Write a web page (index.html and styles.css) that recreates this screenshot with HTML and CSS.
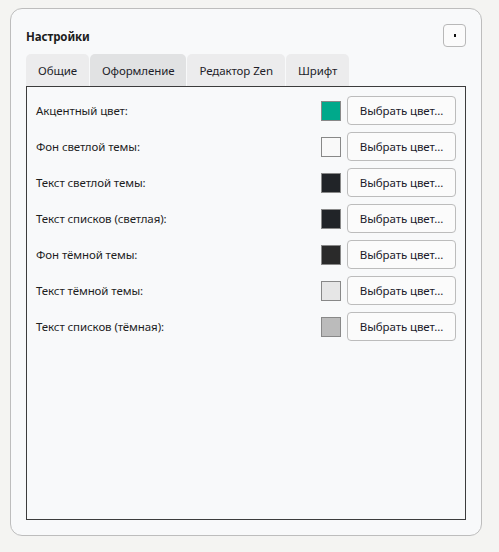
FILE: index.html
```html
<!DOCTYPE html>
<html lang="ru">
<head>
<meta charset="utf-8">
<link rel="stylesheet" href="styles.css">
</head>
<body>
<div class="card">
  <div class="header">
    <div class="title">Настройки</div>
    <button class="close"><span class="dot"></span></button>
  </div>
  <div class="tabs">
    <div class="tab">Общие</div>
    <div class="tab active">Оформление</div>
    <div class="tab">Редактор Zen</div>
    <div class="tab">Шрифт</div>
  </div>
  <div class="panel">
    <div class="row"><span class="label">Акцентный цвет:</span><span class="swatch" style="background:#00a98b"></span><button class="pick">Выбрать цвет...</button></div>
    <div class="row"><span class="label">Фон светлой темы:</span><span class="swatch" style="background:#f9f9f9"></span><button class="pick">Выбрать цвет...</button></div>
    <div class="row"><span class="label">Текст светлой темы:</span><span class="swatch" style="background:#212428"></span><button class="pick">Выбрать цвет...</button></div>
    <div class="row"><span class="label">Текст списков (светлая):</span><span class="swatch" style="background:#212428"></span><button class="pick">Выбрать цвет...</button></div>
    <div class="row"><span class="label">Фон тёмной темы:</span><span class="swatch" style="background:#2a2a2a"></span><button class="pick">Выбрать цвет...</button></div>
    <div class="row"><span class="label">Текст тёмной темы:</span><span class="swatch" style="background:#e6e6e6"></span><button class="pick">Выбрать цвет...</button></div>
    <div class="row"><span class="label">Текст списков (тёмная):</span><span class="swatch" style="background:#bbbbbb"></span><button class="pick">Выбрать цвет...</button></div>
  </div>
</div>
</body>
</html>
```
FILE: styles.css
```css
html, body {
  margin: 0;
  padding: 0;
  background: #f4f4f2;
}
body {
  padding: 8px 17px 16px 10px;
  font-family: "Noto Sans", "Open Sans", sans-serif;
  font-size: 11.5px;
  letter-spacing: -0.1px;
  color: #222;
}
.card {
  box-sizing: border-box;
  width: 472px;
  height: 528px;
  background: #f8f9fa;
  border: 1px solid #bdbdbd;
  border-radius: 12px;
  padding: 15px 15px 15px 15px;
  display: flex;
  flex-direction: column;
}
.header {
  display: flex;
  align-items: center;
  justify-content: space-between;
  height: 23px;
}
.title {
  font-weight: 700;
  color: #1c1c1c;
  padding-top: 2px;
}
.close {
  box-sizing: border-box;
  width: 23px;
  height: 23px;
  padding: 0;
  margin: 0;
  border: 1px solid #b8b8b8;
  border-radius: 4px;
  background: #fbfbfb;
  display: flex;
  align-items: center;
  justify-content: center;
}
.dot {
  width: 2px;
  height: 3px;
  background: #111;
}
.tabs {
  display: flex;
  gap: 1px;
  margin-top: 7px;
  height: 32px;
}
.tab {
  display: flex;
  align-items: center;
  padding: 0 12px;
  background: #ececed;
  border-radius: 5px 5px 0 0;
  color: #1e1e2a;
  white-space: nowrap;
}
.tab.active {
  background: #e1e2e3;
}
.panel {
  flex: 1;
  border: 1px solid #3c3c3c;
  padding: 9px 9px;
  display: flex;
  flex-direction: column;
  gap: 7px;
}
.row {
  display: flex;
  align-items: center;
  height: 29px;
}
.label {
  flex: 1;
  color: #1e1e1e;
}
.swatch {
  box-sizing: border-box;
  width: 20px;
  height: 20px;
  border: 1px solid #888;
  margin-right: 6px;
}
.pick {
  box-sizing: border-box;
  width: 109px;
  height: 29px;
  margin: 0;
  padding: 0;
  border: 1px solid #bcbcbc;
  border-radius: 4px;
  background: #fbfbfb;
  font-family: inherit;
  font-size: 11.5px;
  letter-spacing: -0.1px;
  color: #1a1a2a;
}
```
